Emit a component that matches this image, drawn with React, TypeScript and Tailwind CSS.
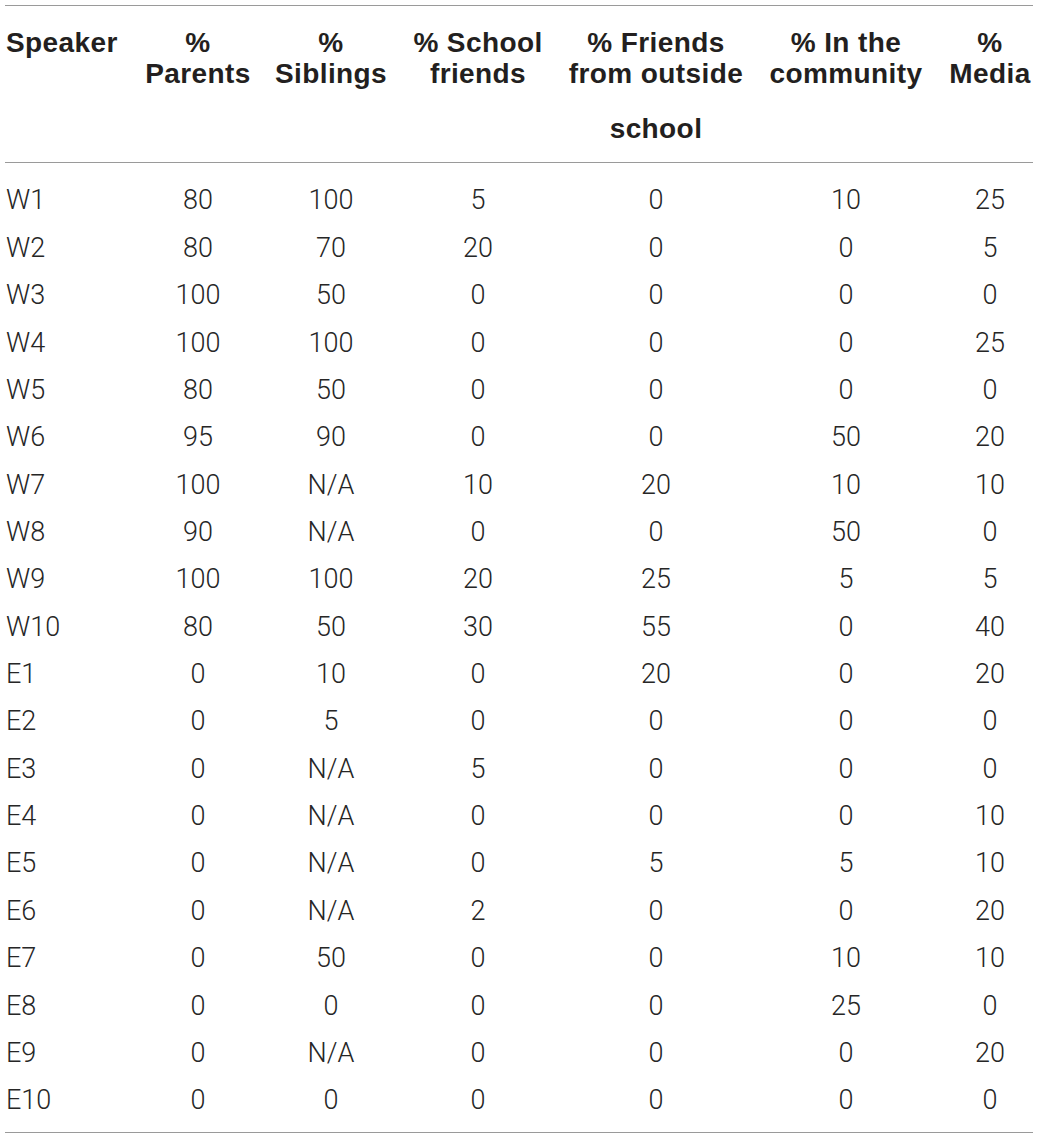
const headers: string[][] = [
  ["Speaker"],
  ["%", "Parents"],
  ["%", "Siblings"],
  ["% School", "friends"],
  ["% Friends", "from outside", "school"],
  ["% In the", "community"],
  ["%", "Media"],
];

const rows: string[][] = [
  ["W1", "80", "100", "5", "0", "10", "25"],
  ["W2", "80", "70", "20", "0", "0", "5"],
  ["W3", "100", "50", "0", "0", "0", "0"],
  ["W4", "100", "100", "0", "0", "0", "25"],
  ["W5", "80", "50", "0", "0", "0", "0"],
  ["W6", "95", "90", "0", "0", "50", "20"],
  ["W7", "100", "N/A", "10", "20", "10", "10"],
  ["W8", "90", "N/A", "0", "0", "50", "0"],
  ["W9", "100", "100", "20", "25", "5", "5"],
  ["W10", "80", "50", "30", "55", "0", "40"],
  ["E1", "0", "10", "0", "20", "0", "20"],
  ["E2", "0", "5", "0", "0", "0", "0"],
  ["E3", "0", "N/A", "5", "0", "0", "0"],
  ["E4", "0", "N/A", "0", "0", "0", "10"],
  ["E5", "0", "N/A", "0", "5", "5", "10"],
  ["E6", "0", "N/A", "2", "0", "0", "20"],
  ["E7", "0", "50", "0", "0", "10", "10"],
  ["E8", "0", "0", "0", "0", "25", "0"],
  ["E9", "0", "N/A", "0", "0", "0", "20"],
  ["E10", "0", "0", "0", "0", "0", "0"],
];

const cols = "grid grid-cols-[118px_150px_116px_178px_178px_202px_86px]";

export default function App() {
  return (
    <div className="w-[1039px] h-[1139px] bg-white pt-[5px] pl-[5px] font-['Liberation_Sans',Arial,sans-serif]">
      <div className="w-[1028px] border-t border-b border-[#9a9a9a]">
        {/* header */}
        <div className={`${cols} border-b border-[#9a9a9a] pt-[21px] pb-[18px] text-[28px] leading-[31px] tracking-[0.4px] font-bold text-[#231f20]`}>
          {headers.map((h, i) => (
            <div key={i} className={`flex flex-col whitespace-nowrap ${i === 0 ? "items-start pl-[1px]" : "items-center"}`}>
              {h.map((line, j) => (
                <div key={j} className={j === 2 ? "mt-[24px]" : ""}>
                  {line}
                </div>
              ))}
            </div>
          ))}
        </div>

        {/* body */}
        <div className="pt-[14px] pb-[8px] font-['Roboto',Arial,sans-serif] font-light text-[27px] text-[#262626]">
          {rows.map((r, i) => (
            <div key={i} className={`${cols} h-[47.37px] items-center`}>
              {r.map((c, j) => (
                <div key={j} className={j === 0 ? "pl-[1px]" : "text-center"}>
                  {c}
                </div>
              ))}
            </div>
          ))}
        </div>
      </div>
    </div>
  );
}
